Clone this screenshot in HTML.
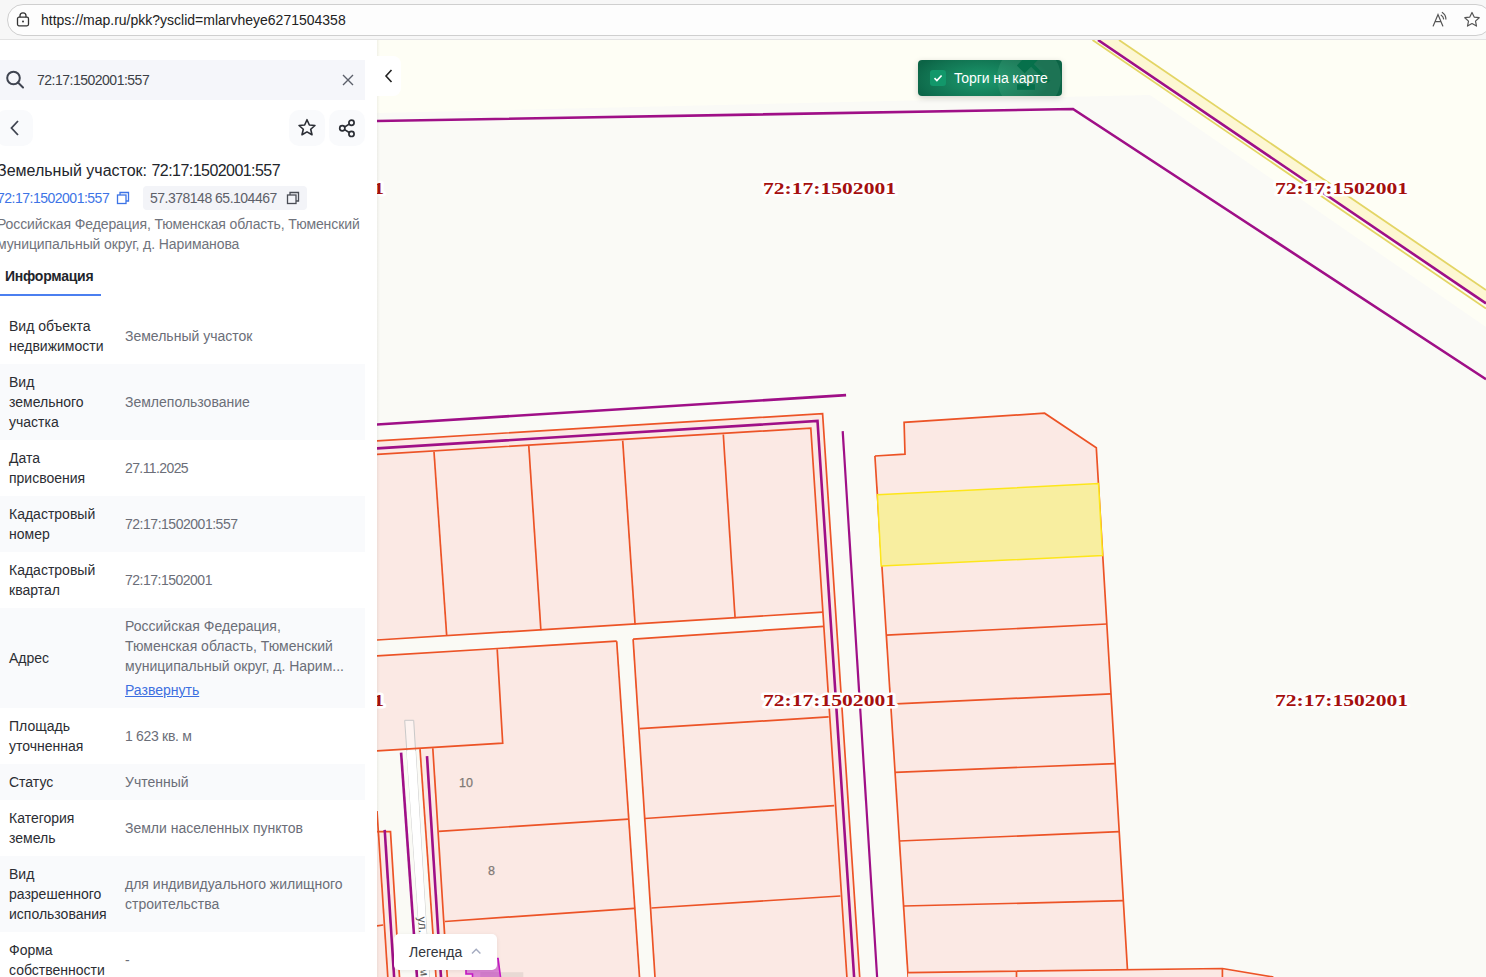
<!DOCTYPE html>
<html><head><meta charset="utf-8">
<style>
*{box-sizing:border-box;margin:0;padding:0}
html,body{width:1486px;height:977px;overflow:hidden;background:#fff;font-family:"Liberation Sans",sans-serif}
#top{position:absolute;z-index:10;left:0;top:0;width:1486px;height:40px;background:#f7f7f7;border-bottom:1px solid #e3e3e3}
#url{position:absolute;left:7px;top:4px;width:1485px;height:32px;border:1px solid #cfcfcf;border-radius:16px;background:#fdfdfd}
#urltext{position:absolute;left:41px;top:12px;font-size:14px;color:#222;letter-spacing:0px}
#map{position:absolute;left:377px;top:40px;width:1109px;height:937px;background:#fefef6;overflow:hidden}
#panel{position:absolute;left:0;top:0;width:377px;height:977px;background:#fff;overflow:hidden}
.abs{position:absolute}
.row{position:absolute;left:0;width:365px}
.row.g{background:#f9fafc}
.lab{position:absolute;left:9px;font-size:14px;line-height:20px;color:#2b2d33}
.val{position:absolute;left:125px;font-size:14px;line-height:20px;color:#6b6e78}
.lnk{color:#3d6fe0;text-decoration:underline}
.lbl{font-family:"Liberation Serif",serif;font-weight:bold;font-size:16.6px;fill:#a50f0f;stroke:#fff;stroke-width:5px;paint-order:stroke;stroke-linejoin:round}
</style></head><body>
<div id="top">
  <div id="url"></div>
  <svg class="abs" style="left:16px;top:12px" width="14" height="16" viewBox="0 0 14 16"><rect x="1.5" y="5.2" width="11" height="8.6" rx="1.5" fill="none" stroke="#333" stroke-width="1.3"/><path d="M4 5.2V3.8a3 3 0 0 1 6 0v1.4" fill="none" stroke="#333" stroke-width="1.3"/><circle cx="7" cy="9.5" r="1" fill="#333"/></svg>
  <div id="urltext">https://map.ru/pkk?ysclid=mlarvheye6271504358</div>
  <svg class="abs" style="left:1430px;top:10px" width="22" height="20" viewBox="0 0 22 20"><path d="M3.2 16L8 4.5 12.8 16M5 11.6h6" fill="none" stroke="#555" stroke-width="1.2" stroke-linecap="round"/><path d="M11.2 5.2a5 5 0 0 1 2.4 3.6M12.3 2.5a8 8 0 0 1 3.6 6.6" fill="none" stroke="#555" stroke-width="1.2" stroke-linecap="round"/></svg>
  <svg class="abs" style="left:1463px;top:11px" width="18" height="18" viewBox="0 0 18 18"><path d="M9 1.5l2.2 4.6 5 .6-3.7 3.4 1 5-4.5-2.5-4.5 2.5 1-5L1.8 6.7l5-.6z" fill="none" stroke="#555" stroke-width="1.2" stroke-linejoin="round"/></svg>
</div>

<div id="panel">
<div class="abs" style="left:0;top:60px;width:365px;height:40px;background:#f5f6fa"></div>
<svg class="abs" style="left:4px;top:69px" width="20" height="20" viewBox="0 0 20 20"><circle cx="9.5" cy="9" r="6.3" fill="none" stroke="#3f4450" stroke-width="2"/><path d="M14 13.5l5 5" stroke="#3f4450" stroke-width="2" stroke-linecap="round"/></svg>
<div class="abs" style="left:37px;top:70px;font-size:14px;line-height:20px;color:#3c3f46;letter-spacing:-0.5px">72:17:1502001:557</div>
<svg class="abs" style="left:342px;top:74px" width="12" height="12" viewBox="0 0 12 12"><path d="M1 1l10 10M11 1L1 11" stroke="#5b5f6a" stroke-width="1.4"/></svg>
<div class="abs" style="left:-4px;top:110px;width:37px;height:36px;background:#f9fafc;border-radius:10px"></div>
<svg class="abs" style="left:8px;top:119px" width="14" height="18" viewBox="0 0 14 18"><path d="M10 2L3.5 9l6.5 7" fill="none" stroke="#3f4450" stroke-width="1.8"/></svg>
<div class="abs" style="left:289px;top:110px;width:36px;height:36px;background:#f9fafc;border-radius:10px"></div>
<svg class="abs" style="left:297px;top:118px" width="20" height="20" viewBox="0 0 20 20"><path d="M10 1.7l2.35 5.3 5.6.5-4.25 3.75 1.3 5.5L10 13.9l-5 2.85 1.3-5.5L2.05 7.5l5.6-.5z" fill="none" stroke="#2b2e35" stroke-width="1.6" stroke-linejoin="round"/></svg>
<div class="abs" style="left:329px;top:110px;width:36px;height:36px;background:#f9fafc;border-radius:10px"></div>
<svg class="abs" style="left:337px;top:118px" width="20" height="20" viewBox="0 0 20 20"><circle cx="14.5" cy="4.7" r="2.6" fill="none" stroke="#2b2e35" stroke-width="1.7"/><circle cx="5.3" cy="10.3" r="2.6" fill="none" stroke="#2b2e35" stroke-width="1.7"/><circle cx="14.5" cy="15.9" r="2.6" fill="none" stroke="#2b2e35" stroke-width="1.7"/><path d="M7.6 9l4.6-2.9M7.6 11.6l4.6 2.9" stroke="#2b2e35" stroke-width="1.7"/></svg>
<div class="abs" style="left:-3px;top:161px;font-size:16px;line-height:20px;color:#22252b;white-space:nowrap">Земельный участок: <span style="letter-spacing:-0.55px">72:17:1502001:557</span></div>
<div class="abs" style="left:-3px;top:188px;font-size:14px;line-height:20px;color:#3d74e6;letter-spacing:-0.5px;white-space:nowrap">72:17:1502001:557</div>
<svg class="abs" style="left:116px;top:191px" width="14" height="14" viewBox="0 0 14 14"><rect x="1.5" y="4" width="8.5" height="8.5" fill="none" stroke="#3d74e6" stroke-width="1.3"/><path d="M4 4V1.5h8.5V10H10" fill="none" stroke="#3d74e6" stroke-width="1.3"/></svg>
<div class="abs" style="left:143px;top:186px;width:164px;height:24px;background:#f3f4f8;border-radius:4px"></div>
<div class="abs" style="left:150px;top:188px;font-size:14px;line-height:20px;color:#5d6069;letter-spacing:-0.5px;white-space:nowrap">57.378148 65.104467</div>
<svg class="abs" style="left:286px;top:191px" width="14" height="14" viewBox="0 0 14 14"><rect x="1.5" y="4" width="8.5" height="8.5" fill="none" stroke="#4a4d55" stroke-width="1.3"/><path d="M4 4V1.5h8.5V10H10" fill="none" stroke="#4a4d55" stroke-width="1.3"/></svg>
<div class="abs" style="left:-3px;top:214px;font-size:14px;line-height:20px;color:#70737c;white-space:nowrap;letter-spacing:-0.1px">Российская Федерация, Тюменская область, Тюменский<br>муниципальный округ, д. Нариманова</div>
<div class="abs" style="left:5px;top:266px;font-size:14px;line-height:20px;color:#22252b;font-weight:bold;letter-spacing:-0.25px">Информация</div>
<div class="abs" style="left:0;top:294px;width:101px;height:2px;background:#4b7ff0"></div>
<div class="row" style="top:308px;height:56px"></div>
<div class="lab" style="top:316px">Вид объекта<br>недвижимости</div>
<div class="val" style="top:326px">Земельный участок</div>
<div class="row g" style="top:364px;height:76px"></div>
<div class="lab" style="top:372px">Вид<br>земельного<br>участка</div>
<div class="val" style="top:392px">Землепользование</div>
<div class="row" style="top:440px;height:56px"></div>
<div class="lab" style="top:448px">Дата<br>присвоения</div>
<div class="val" style="top:458px;letter-spacing:-0.6px">27.11.2025</div>
<div class="row g" style="top:496px;height:56px"></div>
<div class="lab" style="top:504px">Кадастровый<br>номер</div>
<div class="val" style="top:514px;letter-spacing:-0.48px">72:17:1502001:557</div>
<div class="row" style="top:552px;height:56px"></div>
<div class="lab" style="top:560px">Кадастровый<br>квартал</div>
<div class="val" style="top:570px;letter-spacing:-0.5px">72:17:1502001</div>
<div class="row g" style="top:608px;height:100px"></div>
<div class="lab" style="top:648px">Адрес</div>
<div class="val" style="top:616px">Российская Федерация,<br>Тюменская область, Тюменский<br>муниципальный округ, д. Нарим...</div>
<div class="val lnk" style="top:680px">Развернуть</div>
<div class="row" style="top:708px;height:56px"></div>
<div class="lab" style="top:716px">Площадь<br>уточненная</div>
<div class="val" style="top:726px;letter-spacing:-0.3px">1 623 кв. м</div>
<div class="row g" style="top:764px;height:36px"></div>
<div class="lab" style="top:772px">Статус</div>
<div class="val" style="top:772px">Учтенный</div>
<div class="row" style="top:800px;height:56px"></div>
<div class="lab" style="top:808px">Категория<br>земель</div>
<div class="val" style="top:818px">Земли населенных пунктов</div>
<div class="row g" style="top:856px;height:76px"></div>
<div class="lab" style="top:864px">Вид<br>разрешенного<br>использования</div>
<div class="val" style="top:874px">для индивидуального жилищного<br>строительства</div>
<div class="row" style="top:932px;height:56px"></div>
<div class="lab" style="top:940px">Форма<br>собственности</div>
<div class="val" style="top:950px">-</div>
</div>

<div id="map">
<!--MAP-->
<svg class="abs" style="left:0;top:0" width="1109" height="937" viewBox="377 40 1109 937">
<style>
.o{stroke:#ec5326;stroke-width:1.7;fill:none}
.pu{stroke:#9f0f87;stroke-width:2.6;fill:none;stroke-linecap:butt}
.pk{fill:#fbe9e4}
.cr{fill:#fafaf5}
</style>
<rect x="377" y="40" width="1109" height="937" fill="#fefef5"/>
<polygon points="377.0,113.0 1150.0,95.0 1486.0,327.0 1486.0,977.0 377.0,977.0" fill="#fafaf6"/>
<polygon points="1098.0,40.0 1119.0,40.0 1486.0,290.0 1486.0,303.4" fill="#fdf7d3"/>
<line x1="1119.0" y1="40.0" x2="1486.0" y2="290.0" stroke="#e3d565" stroke-width="1.8"/>
<line x1="1092.5" y1="40.0" x2="1486.0" y2="308.5" stroke="#e3d565" stroke-width="1.8"/>
<line x1="1098.0" y1="40.0" x2="1486.0" y2="303.4" class="pu"/>
<polyline points="377.0,121.0 1073.0,109.0 1486.0,379.2" class="pu"/>
<line x1="377.0" y1="424.5" x2="846.1" y2="395.1" class="pu"/>
<polygon points="377.0,440.9 822.6,413.6 859.7,977.0 377.0,977.0" class="pk"/>
<polygon points="377.0,640.0 822.9,612.2 823.8,626.3 377.0,655.9" class="cr"/>
<polygon points="616.0,630.0 632.4,628.0 633.1,639.1 655.0,977.0 639.5,977.0 616.7,641.2" class="cr"/>
<polygon points="377.0,750.8 432.8,748.3 447.0,977.0 377.0,977.0" class="cr"/>
<polygon points="420.0,749.1 432.8,748.3 447.0,977.0 436.0,977.0" class="pk"/>
<polygon points="377.0,811.0 387.8,977.0 377.0,977.0" class="pk"/>
<polygon points="377.0,831.7 390.5,831.7 399.5,977.0 377.0,977.0" class="pk"/>
<polygon points="404.7,720.3 413.7,720.3 429.3,977.0 422.4,977.0" fill="#ffffff" fill-opacity="0.45" stroke="#c9c9c9" stroke-width="1"/>
<polygon points="406.6,751.0 415.6,751.0 429.3,977.0 422.4,977.0" fill="#ffffff"/>
<polyline points="377.0,440.9 822.6,413.6 859.7,977.0" class="o"/>
<polyline points="377.0,454.3 810.8,428.1 846.9,977.0" class="o"/>
<polyline points="377.0,448.4 817.5,421.0 854.1,977.0" class="pu"/>
<line x1="377.0" y1="640.0" x2="822.9" y2="612.2" class="o"/>
<line x1="434.0" y1="451.7" x2="446.7" y2="635.7" class="o"/>
<line x1="528.8" y1="446.0" x2="540.9" y2="630.3" class="o"/>
<line x1="622.7" y1="440.6" x2="635.1" y2="624.6" class="o"/>
<line x1="723.3" y1="434.5" x2="735.1" y2="618.2" class="o"/>
<line x1="377.0" y1="655.9" x2="616.7" y2="641.2" class="o"/>
<line x1="616.7" y1="641.2" x2="639.5" y2="977.0" class="o"/>
<line x1="633.1" y1="639.1" x2="823.8" y2="626.3" class="o"/>
<line x1="633.1" y1="639.1" x2="655.0" y2="977.0" class="o"/>
<polyline points="497.2,649.2 502.7,743.2 377.0,750.8" class="o"/>
<line x1="432.8" y1="748.3" x2="447.3" y2="977.0" class="o"/>
<line x1="420.0" y1="749.1" x2="436.0" y2="977.0" class="o"/>
<line x1="438.7" y1="831.3" x2="628.4" y2="819.2" class="o"/>
<line x1="444.9" y1="921.5" x2="634.2" y2="908.3" class="o"/>
<line x1="639.7" y1="728.6" x2="828.7" y2="716.9" class="o"/>
<line x1="644.9" y1="818.5" x2="834.2" y2="805.7" class="o"/>
<line x1="651.4" y1="908.0" x2="840.4" y2="896.0" class="o"/>
<line x1="377.0" y1="811.0" x2="387.8" y2="977.0" class="o"/>
<polyline points="377.0,831.7 390.5,831.7 399.5,977.0" class="o"/>
<line x1="377.0" y1="925.8" x2="383.2" y2="925.0" class="o"/>
<line x1="384.7" y1="829.9" x2="394.1" y2="977.0" class="pu"/>
<line x1="401.1" y1="752.7" x2="417.0" y2="977.0" class="pu"/>
<line x1="427.0" y1="756.1" x2="441.0" y2="977.0" class="pu"/>
<line x1="842.7" y1="431.1" x2="877.1" y2="977.0" class="pu" style="stroke-width:2.2px"/>
<polygon points="874.9,456.0 905.0,454.1 904.1,422.4 1044.6,413.2 1096.3,447.7 1127.9,977.0 908.1,977.0" class="pk"/>
<polyline points="874.9,456.0 905.0,454.1 904.1,422.4 1044.6,413.2 1096.3,447.7 1127.9,977.0" class="o"/>
<line x1="874.9" y1="456.0" x2="908.1" y2="977.0" class="o"/>
<line x1="886.3" y1="635.2" x2="1106.8" y2="624.0" class="o"/>
<line x1="890.7" y1="704.1" x2="1111.0" y2="693.9" class="o"/>
<line x1="895.0" y1="772.3" x2="1115.2" y2="763.6" class="o"/>
<line x1="899.4" y1="841.0" x2="1119.2" y2="831.7" class="o"/>
<line x1="903.6" y1="906.0" x2="1123.3" y2="900.7" class="o"/>
<polygon points="908.1,972.6 1222.4,968.5 1273.4,977.0 908.1,977.0" class="pk"/>
<polyline points="908.1,972.6 1222.4,968.5 1273.4,977.0" class="o"/>
<line x1="1016.5" y1="971.5" x2="1016.5" y2="977.0" class="o"/>
<line x1="1222.4" y1="968.5" x2="1222.4" y2="977.0" class="o"/>
<polygon points="877.4,494.7 1098.5,483.6 1102.6,555.6 881.2,566.0" fill="#f8eea0" stroke="#fde61a" stroke-width="1.5"/>
<rect x="480.3" y="972.2" width="43" height="5" fill="#e8d9d4"/>
<polygon points="466.0,969.0 466.0,974.0 472.5,974.0 472.5,977.0 500.5,977.0 498.1,958.5 474.0,958.5 474.0,969.0" fill="#da85d4"/>
<rect x="480.3" y="972.2" width="19" height="5" fill="#d07bc9"/>
<polyline points="466.0,969.0 466.0,974.0 472.5,974.0 472.5,977.0" fill="none" stroke="#c417c4" stroke-width="1.6"/>
<polyline points="474.0,958.5 498.1,958.5 500.5,977.0" fill="none" stroke="#c417c4" stroke-width="1.6"/>
<text x="763" y="194" class="lbl" textLength="133" lengthAdjust="spacingAndGlyphs">72:17:1502001</text>
<text x="1275" y="194" class="lbl" textLength="133" lengthAdjust="spacingAndGlyphs">72:17:1502001</text>
<text x="763" y="706" class="lbl" textLength="133" lengthAdjust="spacingAndGlyphs">72:17:1502001</text>
<text x="1275" y="706" class="lbl" textLength="133" lengthAdjust="spacingAndGlyphs">72:17:1502001</text>
<text x="251" y="194" class="lbl" textLength="133" lengthAdjust="spacingAndGlyphs">72:17:1502001</text>
<text x="251" y="706" class="lbl" textLength="133" lengthAdjust="spacingAndGlyphs">72:17:1502001</text>
<text x="466" y="786.5" font-size="12.5" fill="#7f7975" text-anchor="middle" font-family="Liberation Sans" stroke="#7f7975" stroke-width="0.25">10</text>
<text x="491.5" y="874.5" font-size="12.5" fill="#7f7975" text-anchor="middle" font-family="Liberation Sans" stroke="#7f7975" stroke-width="0.25">8</text>
<text transform="translate(418,917) rotate(86)" font-size="12" fill="#555" font-family="Liberation Sans">ул.</text>
<text transform="translate(420,968) rotate(86)" font-size="12" fill="#555" font-family="Liberation Sans">м</text>
</svg>
<!--/MAP-->
<div class="abs" style="left:0;top:0;width:3px;height:937px;background:linear-gradient(90deg,rgba(60,60,40,0.07),rgba(60,60,40,0.03) 50%,rgba(0,0,0,0))"></div>
<div class="abs" style="left:0;top:16px;width:24px;height:40px;background:#fff;border-radius:0 8px 8px 0"></div>
<svg class="abs" style="left:6px;top:29px" width="12" height="14" viewBox="0 0 12 14"><path d="M8.5 1L3 7l5.5 6" fill="none" stroke="#222" stroke-width="1.6"/></svg>
<div class="abs" style="left:541px;top:20px;width:144px;height:36px;border-radius:4px;background:radial-gradient(ellipse 70px 30px at 62px 20px,#1c9a6e,#10704f 80%,#0c6446);box-shadow:0 2px 6px rgba(0,0,0,0.18);overflow:hidden">
<div class="abs" style="left:79px;top:-15px;width:64px;height:66px;border-radius:50%;background:rgba(120,200,160,0.16)"></div>
<svg class="abs" style="left:0;top:0" width="144" height="36" viewBox="0 0 144 36"><g transform="rotate(-45 110.5 1.5)"><rect x="99.5" y="-4" width="22" height="11" fill="#06704b"/><rect x="108.7" y="6.5" width="3.6" height="24" fill="#06704b"/></g><rect x="99" y="24.3" width="18" height="5.5" fill="#06704b"/></svg>
<div class="abs" style="left:12px;top:10px;width:16px;height:16px;border-radius:3px;background:#12976a"></div>
<svg class="abs" style="left:14px;top:12px" width="12" height="12" viewBox="0 0 12 12"><path d="M2.5 6.2l2.4 2.3 4.7-5" fill="none" stroke="#fff" stroke-width="1.7"/></svg>
<div class="abs" style="left:36px;top:8px;font-size:14px;line-height:20px;color:#fff;white-space:nowrap;letter-spacing:-0.1px">Торги на карте</div>
</div>
<div class="abs" style="left:17px;top:894px;width:103px;height:36px;border-radius:5px;background:#fff;box-shadow:0 1px 4px rgba(0,0,0,0.08)"></div>
<div class="abs" style="left:32px;top:902px;font-size:14px;line-height:20px;color:#33363d;white-space:nowrap">Легенда</div>
<svg class="abs" style="left:93px;top:906px" width="12" height="10" viewBox="0 0 12 10"><path d="M2 7.5l4.2-4.2L10.4 7.5" fill="none" stroke="#a4abc0" stroke-width="1.4"/></svg>
</div>
</body></html>
